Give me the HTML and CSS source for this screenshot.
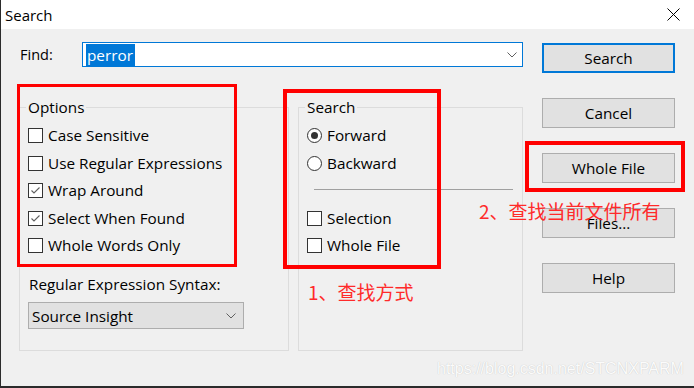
FILE: index.html
```html
<!DOCTYPE html>
<html>
<head>
<meta charset="utf-8">
<link rel="stylesheet" href="styles.css">
</head>
<body>
<div class="window">
  <div class="titlebar">
    <span class="title">Search</span>
    <svg class="close" width="13" height="13" viewBox="0 0 13 13"><path d="M0.5 0.5 L12.5 12.5 M12.5 0.5 L0.5 12.5" stroke="#000" stroke-width="1" fill="none"/></svg>
  </div>
  <div class="body">
    <div class="main">
      <div class="find-row">
        <span class="find-label">Find:</span>
        <div class="combo">
          <span class="sel">perror</span>
          <svg class="chev" width="10" height="6" viewBox="0 0 10 6"><path d="M0.5 0.5 L5 5 L9.5 0.5" stroke="#606060" stroke-width="1" fill="none"/></svg>
        </div>
      </div>
      <div class="groups">
        <fieldset class="group options">
          <legend>Options</legend>
          <div class="rows">
            <div class="row"><span class="cb"></span>Case Sensitive</div>
            <div class="row"><span class="cb"></span>Use Regular Expressions</div>
            <div class="row"><span class="cb"><svg width="13" height="13" viewBox="0 0 13 13"><path d="M2.5 6.5 L5 9 L10.5 3.5" stroke="#606060" stroke-width="1.1" fill="none"/></svg></span>Wrap Around</div>
            <div class="row"><span class="cb"><svg width="13" height="13" viewBox="0 0 13 13"><path d="M2.5 6.5 L5 9 L10.5 3.5" stroke="#606060" stroke-width="1.1" fill="none"/></svg></span>Select When Found</div>
            <div class="row"><span class="cb"></span>Whole Words Only</div>
          </div>
          <div class="syntax-label">Regular Expression Syntax:</div>
          <div class="dropdown">
            <span>Source Insight</span>
            <svg class="chev" width="10" height="6" viewBox="0 0 10 6"><path d="M0.5 0.5 L5 5 L9.5 0.5" stroke="#606060" stroke-width="1" fill="none"/></svg>
          </div>
        </fieldset>
        <fieldset class="group search">
          <legend>Search</legend>
          <div class="rows">
            <div class="row"><span class="rb on"></span>Forward</div>
            <div class="row"><span class="rb"></span>Backward</div>
            <div class="row sep-row"><span class="sep"></span></div>
            <div class="row"><span class="cb"></span>Selection</div>
            <div class="row"><span class="cb"></span>Whole File</div>
          </div>
        </fieldset>
      </div>
    </div>
    <div class="buttons">
      <div class="btn default">Search</div>
      <div class="btn">Cancel</div>
      <div class="btn">Whole File</div>
      <div class="btn">Files...</div>
      <div class="btn">Help</div>
    </div>
  </div>
  <div class="mark box1"></div>
  <div class="mark box2"></div>
  <div class="mark box3"></div>
  <div class="note note1">1、查找方式</div>
  <div class="note note2">2、查找当前文件所有</div>
  <div class="watermark">https://blog.csdn.net/STCNXPARM</div>
</div>
</body>
</html>
```

FILE: styles.css
```css
* { box-sizing: border-box; }
html, body { margin: 0; padding: 0; }
body {
  width: 694px;
  height: 388px;
  overflow: hidden;
  background: #2b2b2b;
  font-family: "Open Sans", "Noto Sans", sans-serif;
  font-size: 15.3px;
  color: #000;
}
.window {
  position: relative;
  width: 693px;
  height: 386px;
  margin-left: 1px;
  background: #f0f0f0;
}
.titlebar {
  height: 29px;
  background: #fff;
  display: flex;
  align-items: center;
  justify-content: space-between;
  padding: 0 14px 0 4px;
}
.title { font-size: 15px; line-height: 20px; }
.close { display: block; margin-top: 0; }
.body {
  display: flex;
  padding: 13px 0 0 18px;
}
.main { width: 504px; }
.find-row {
  display: flex;
  align-items: center;
  height: 25px;
}
.find-label {
  width: 63px;
  padding-left: 1px;
  font-size: 14.5px;
}
.combo {
  flex: 1;
  height: 25px;
  background: #fff;
  border: 1px solid #0078d7;
  display: flex;
  align-items: center;
  justify-content: space-between;
  padding: 0 5px 0 3px;
}
.sel {
  background: #0078d7;
  color: #fff;
  line-height: 22px;
  height: 22px;
  padding: 0 2px 0 1px;
}
.chev { display: block; }
.groups {
  display: flex;
  gap: 9px;
  margin-top: 30px;
}
.group {
  margin: 0;
  border: 1px solid #dcdcdc;
  height: 254px;
  padding: 11px 8px 0 8px;
  min-width: 0;
}
.group legend {
  padding: 0 2px;
  margin-left: -2px;
  line-height: 20px;
}
.options { width: 270px; }
.search { width: 225px; }
.rows {
  display: flex;
  flex-direction: column;
  gap: 12.5px;
}
.row {
  display: flex;
  align-items: center;
  height: 15px;
  line-height: 15px;
  white-space: nowrap;
}
.cb {
  width: 15px;
  height: 15px;
  border: 1px solid #333;
  background: #fff;
  margin-right: 5px;
  flex: none;
  display: flex;
  align-items: center;
  justify-content: center;
}
.cb svg { display: block; }
.rb {
  width: 15px;
  height: 15px;
  border: 1px solid #333;
  border-radius: 50%;
  background: #fff;
  margin-right: 5px;
  flex: none;
  display: flex;
  align-items: center;
  justify-content: center;
}
.rb.on::after {
  content: "";
  width: 7px;
  height: 7px;
  border-radius: 50%;
  background: #333;
}
.sep {
  display: block;
  margin-left: 7px;
  margin-top: -3px;
  width: 199px;
  height: 1px;
  background: #a0a0a0;
}
.syntax-label {
  margin-top: 21px;
  line-height: 20px;
  padding-left: 1px;
}
.dropdown {
  margin-top: 8px;
  width: 216px;
  height: 27px;
  background: #e1e1e1;
  border: 1px solid #adadad;
  display: flex;
  align-items: center;
  justify-content: space-between;
  padding: 0 7px 0 3px;
}
.buttons {
  margin-left: 19px;
  padding-top: 1px;
  display: flex;
  flex-direction: column;
  gap: 25px;
}
.btn {
  width: 133px;
  height: 30px;
  background: #e1e1e1;
  border: 1px solid #adadad;
  display: flex;
  align-items: center;
  justify-content: center;
}
.btn.default { border: 2px solid #0078d7; }
.mark {
  position: absolute;
  border: 3px solid #ff0000;
}
.box1 { left: 16px; top: 84px; width: 220px; height: 183px; }
.box2 { left: 282px; top: 89px; width: 158px; height: 180px; border-width: 4px; }
.box3 { left: 524px; top: 141px; width: 160px; height: 51px; border-width: 4px; }
.note {
  position: absolute;
  font-family: "Noto Sans CJK SC", sans-serif;
  font-size: 19px;
  line-height: 19px;
  color: #ff2a2a;
  white-space: nowrap;
}
.note1 { left: 307px; top: 282px; }
.note2 { left: 478px; top: 201px; }
.watermark {
  position: absolute;
  left: 436px;
  top: 360px;
  font-family: "Liberation Sans", Arial, sans-serif;
  font-size: 16px;
  line-height: 18px;
  color: #fbfbfb;
  text-shadow: 0 0 1px rgba(0, 0, 0, 0.22);
  white-space: nowrap;
}
```
